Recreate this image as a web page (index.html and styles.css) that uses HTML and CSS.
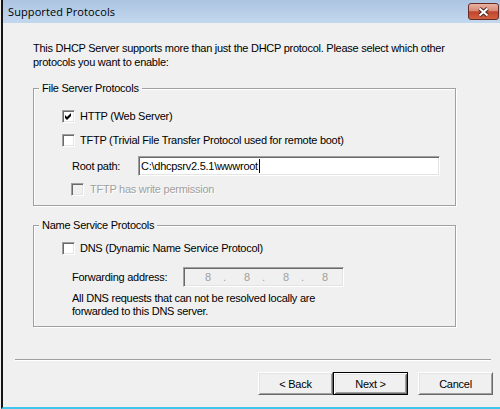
FILE: index.html
```html
<!DOCTYPE html>
<html lang="en">
<head>
    <meta charset="UTF-8">
    <title>Supported Protocols</title>
    <link rel="stylesheet" href="styles.css">
</head>
<body>

<div class="window">
    <div class="titlebar">
        <span class="title">Supported Protocols</span>
        <span class="close">
            <svg width="13" height="10" viewBox="0 0 13 10">
                <path d="M2.5 1.5 L10.5 8.5 M10.5 1.5 L2.5 8.5" stroke="#4a2320" stroke-width="4"/>
                <path d="M2.5 1.5 L10.5 8.5 M10.5 1.5 L2.5 8.5" stroke="#ffffff" stroke-width="2"/>
            </svg>
        </span>
    </div>

    <div class="content">
        <p class="intro">This DHCP Server supports more than just the DHCP protocol. Please select which other<br>protocols you want to enable:</p>

        <!-- FILE SERVER -->
        <fieldset class="group file-group">
            <legend>File Server Protocols</legend>
            <div class="row check-row">
                <span class="check">
                    <svg width="9" height="9" viewBox="0 0 9 9"><polygon points="1,3 3,5 7,1 7,4 3,8 1,6" fill="#000"/></svg>
                </span>
                <span>HTTP (Web Server)</span>
            </div>
            <div class="row check-row">
                <span class="check"></span>
                <span>TFTP (Trivial File Transfer Protocol used for remote boot)</span>
            </div>
            <div class="row field-row root-row">
                <span class="field-label root-label">Root path:</span>
                <span class="textbox">C:\dhcpsrv2.5.1\wwwroot<span class="caret"></span></span>
            </div>
            <div class="row sub-check disabled">
                <span class="check"></span>
                <span>TFTP has write permission</span>
            </div>
        </fieldset>

        <!-- NAME SERVICE -->
        <fieldset class="group dns-group">
            <legend>Name Service Protocols</legend>
            <div class="row check-row">
                <span class="check"></span>
                <span>DNS (Dynamic Name Service Protocol)</span>
            </div>
            <div class="row field-row fwd-row">
                <span class="field-label fwd-label">Forwarding address:</span>
                <span class="ipbox">
                    <span class="octet">8</span><span class="dot">.</span>
                    <span class="octet">8</span><span class="dot">.</span>
                    <span class="octet">8</span><span class="dot">.</span>
                    <span class="octet">8</span>
                </span>
            </div>
            <p class="note">All DNS requests that can not be resolved locally are<br>forwarded to this DNS server.</p>
        </fieldset>
    </div>

    <!-- TOMBOL -->
    <div class="footer">
        <div class="separator"></div>
        <div class="buttons">
            <button class="btn">&lt; Back</button>
            <button class="btn default">Next &gt;</button>
            <button class="btn">Cancel</button>
        </div>
    </div>
</div>

</body>
</html>
```

FILE: styles.css
```css
html, body {
    margin: 0;
    background-color: #f0f0f0;
}

body {
    font-family: "Liberation Sans", Arial, sans-serif;
    font-size: 11px;
    letter-spacing: -0.26px;
    color: #000;
}

.window {
    width: 499px;
    height: 409px;
    box-sizing: border-box;
    margin-left: 1px;
    border-left: 2px solid #151515;
    border-bottom: 2px solid #3ec6ec;
}

.titlebar {
    height: 23px;
    display: flex;
    justify-content: space-between;
    align-items: flex-start;
    padding-left: 5px;
    background: linear-gradient(#abc4e1, #c3d8ef);
}

.title {
    font-family: "Open Sans", "Noto Sans", sans-serif;
    font-size: 11px;
    letter-spacing: 0.1px;
    line-height: 23px;
}

.close {
    width: 31px;
    height: 17px;
    box-sizing: border-box;
    margin: 3px 1px 0 0;
    border: 1px solid #6a2a24;
    border-radius: 3px;
    display: flex;
    align-items: center;
    justify-content: center;
    background: linear-gradient(#e8b2a4 0%, #d88a76 45%, #c2432c 52%, #d0623f 100%);
}

.content {
    padding: 18px 0 0 30px;
}

.intro {
    margin: 0;
    line-height: 14px;
}

.group {
    width: 423px;
    box-sizing: border-box;
    margin: 13px 0 0;
    padding: 0;
    border: 1px solid #a0a0a0;
    box-shadow: inset 1px 1px #fff, 1px 1px #fff;
}

.group legend {
    margin-left: 5px;
    padding: 0 3px;
    line-height: 13px;
    background-color: #f0f0f0;
}

.file-group {
    padding-top: 9px;
    padding-bottom: 7px;
}

.dns-group {
    padding-top: 4px;
    padding-bottom: 8px;
}

.row {
    display: flex;
    align-items: center;
}

.check-row {
    height: 24px;
    margin-left: 28px;
}

.check {
    width: 13px;
    height: 13px;
    flex: none;
    box-sizing: border-box;
    display: flex;
    align-items: center;
    justify-content: center;
    margin-right: 5px;
    background-color: #fff;
    border: 1px solid;
    border-color: #a0a0a0 #fff #fff #a0a0a0;
    box-shadow: inset 1px 1px #696969, inset -1px -1px #e3e3e3;
}

.sub-check {
    height: 18px;
    margin-left: 37px;
}

.sub-check .check {
    margin-right: 6px;
}

.disabled {
    color: #a0a0a0;
    text-shadow: 1px 1px #fff;
}

.disabled .check {
    background-color: #f0f0f0;
}

.field-row {
    margin-left: 38px;
}

.root-row {
    height: 28px;
}

.root-label {
    width: 66px;
}

.fwd-row {
    height: 20px;
    margin-top: 7px;
}

.fwd-label {
    width: 111px;
}

.textbox, .ipbox {
    height: 20px;
    box-sizing: border-box;
    display: flex;
    align-items: center;
    border: 1px solid;
    border-color: #a0a0a0 #fff #fff #a0a0a0;
    box-shadow: inset 1px 1px #696969, inset -1px -1px #e3e3e3;
}

.textbox {
    width: 302px;
    padding-left: 2px;
    background-color: #fff;
}

.caret {
    display: inline-block;
    width: 1px;
    height: 14px;
    margin-left: 1px;
    background-color: #000;
}

.ipbox {
    width: 161px;
    padding-left: 9px;
    background-color: #f0f0f0;
    color: #a0a0a0;
}

.octet {
    width: 30px;
    text-align: center;
}

.dot {
    width: 9px;
}

.note {
    margin: 5px 0 0 38px;
    line-height: 13px;
}

.footer {
    padding-top: 32px;
}

.separator {
    width: 476px;
    margin-left: 12px;
    border-top: 1px solid #a0a0a0;
    border-bottom: 1px solid #fff;
}

.buttons {
    display: flex;
    justify-content: flex-end;
    margin-top: 11px;
    padding-right: 7px;
}

.btn {
    width: 75px;
    height: 23px;
    padding: 0;
    font-family: inherit;
    font-size: 11px;
    letter-spacing: -0.26px;
    color: #000;
    background-color: #f0f0f0;
    border: 1px solid;
    border-color: #fff #696969 #696969 #fff;
    box-shadow: inset 1px 1px #e3e3e3, inset -1px -1px #a0a0a0;
}

.btn.default {
    margin-right: 10px;
    border-color: #000;
    box-shadow: inset 1px 1px #fff, inset -1px -1px #696969, inset 2px 2px #e3e3e3, inset -2px -2px #a0a0a0;
}
```
